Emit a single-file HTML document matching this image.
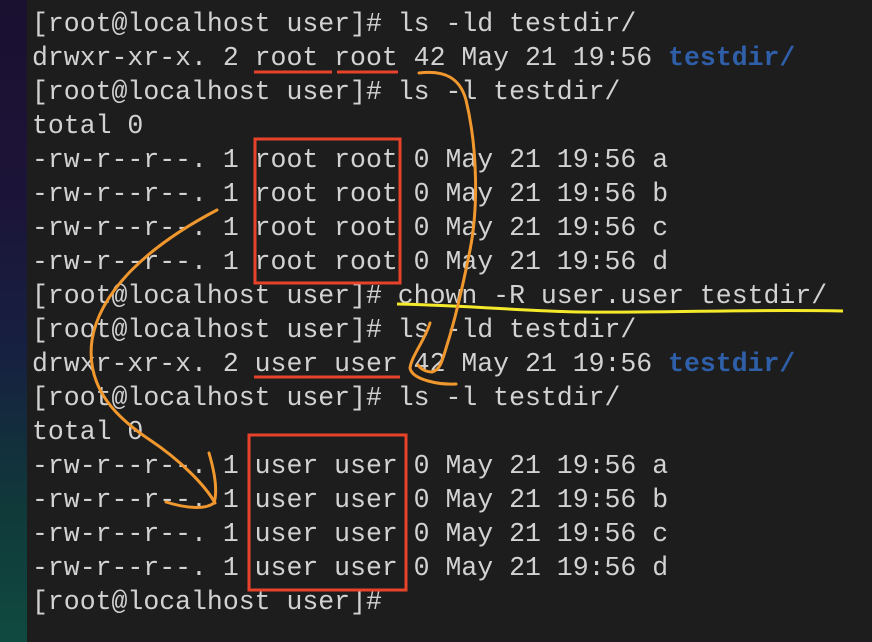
<!DOCTYPE html>
<html><head><style>
body{margin:0;width:872px;height:642px;overflow:hidden;background:#1d1d1d;position:relative;font-family:"Liberation Mono",monospace}
#strip{position:absolute;left:0;top:0;width:27px;height:642px;background:linear-gradient(180deg,#1a1030 0%,#1c1438 30%,#162040 55%,#103a3a 80%,#0f4a40 100%)}
pre{position:absolute;left:32px;top:7px;margin:0;font-size:26.5px;line-height:34px;color:#d2d2d2;font-family:"Liberation Mono",monospace}
.b{color:#2e5fa8;font-weight:bold}
svg{position:absolute;left:0;top:0}
</style></head><body>
<div id="strip"></div>
<pre>[root@localhost user]# ls -ld testdir/
drwxr-xr-x. 2 root root 42 May 21 19:56 <span class="b">testdir/</span>
[root@localhost user]# ls -l testdir/
total 0
-rw-r--r--. 1 root root 0 May 21 19:56 a
-rw-r--r--. 1 root root 0 May 21 19:56 b
-rw-r--r--. 1 root root 0 May 21 19:56 c
-rw-r--r--. 1 root root 0 May 21 19:56 d
[root@localhost user]# chown -R user.user testdir/
[root@localhost user]# ls -ld testdir/
drwxr-xr-x. 2 user user 42 May 21 19:56 <span class="b">testdir/</span>
[root@localhost user]# ls -l testdir/
total 0
-rw-r--r--. 1 user user 0 May 21 19:56 a
-rw-r--r--. 1 user user 0 May 21 19:56 b
-rw-r--r--. 1 user user 0 May 21 19:56 c
-rw-r--r--. 1 user user 0 May 21 19:56 d
[root@localhost user]#</pre>
<svg width="872" height="642" fill="none">
<g stroke="#e8432a" stroke-width="3">
<line x1="254" y1="72" x2="332" y2="72"/><line x1="337" y1="72" x2="398" y2="72"/>
<rect x="255" y="139" width="145" height="144"/>
<line x1="254" y1="377" x2="400" y2="377"/>
<rect x="249" y="435" width="157" height="155"/>
</g>
<path d="M397 304 C480 306 520 311 580 312 C680 313 740 309 843 311" stroke="#f5ea2a" stroke-width="3"/>
<g stroke="#f0972e" stroke-width="3" stroke-linecap="round" stroke-linejoin="round">
<path d="M419 73 C445 70 460 78 466 100 C478 150 478 210 470 250 C462 290 455 320 447 345 C442 362 440 370 432 372 C425 372 420 368 418 365"/>
<path d="M430 323 C425 340 412 355 410 368 C412 380 440 385 456 384"/>
<path d="M217 210 C150 245 100 290 92 340 C85 390 120 420 150 440 C180 460 205 485 215 503"/>
<path d="M209 453 C214 470 218 490 214 503 C205 510 185 508 166 502"/>
</g>
</svg>
</body></html>
